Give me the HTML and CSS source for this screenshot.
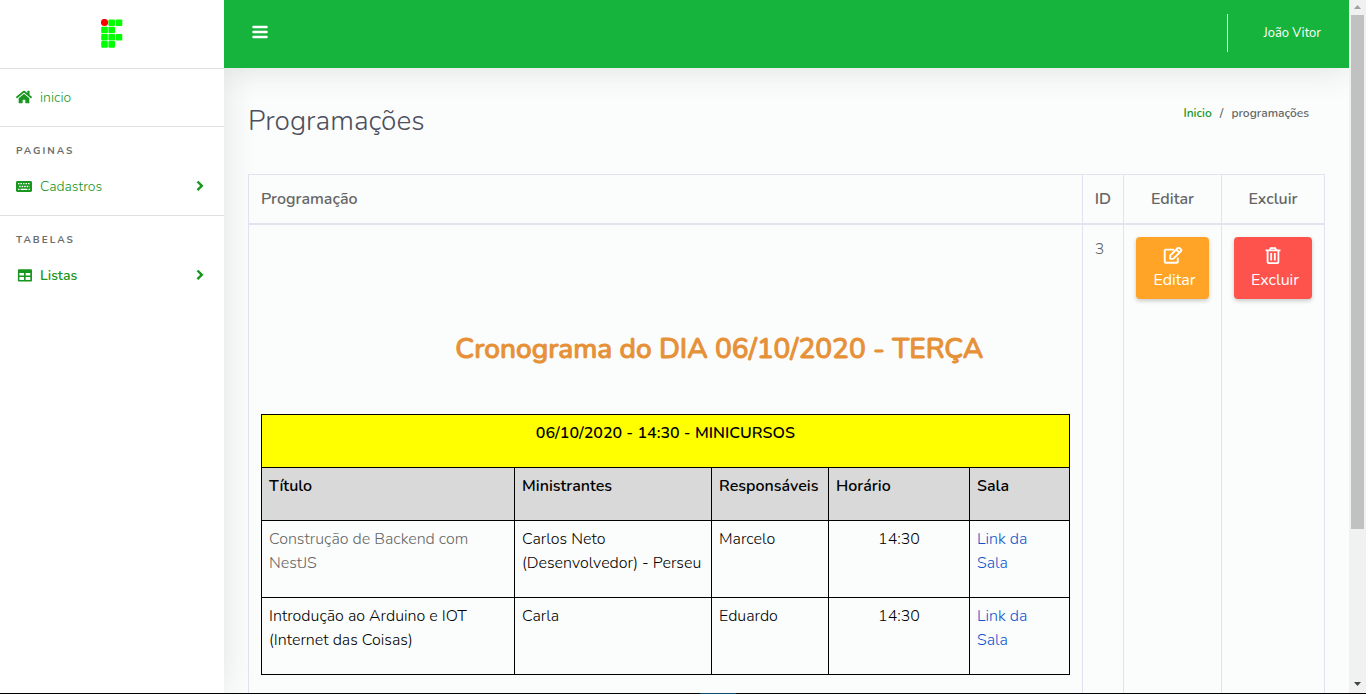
FILE: index.html
```html
<!DOCTYPE html>
<html lang="pt-BR">
<head>
<meta charset="utf-8">
<title>Programações</title>
<link rel="stylesheet" href="styles.css">
</head>
<body>
<div class="app">
  <aside class="sidebar">
    <a class="brand" href="#" aria-label="Página inicial">
      <svg class="brand-logo" viewBox="0 0 22 29">
        <g fill="#0f0">
          <rect x="7.4" y="0.5" width="6.6" height="6.6" rx="1"/><rect x="14.7" y="0.5" width="6.6" height="6.6" rx="1"/>
          <rect x="0.2" y="7.7" width="6.6" height="6.6" rx="1"/><rect x="7.4" y="7.7" width="6.6" height="6.6" rx="1"/>
          <rect x="0.2" y="14.9" width="6.6" height="6.6" rx="1"/><rect x="7.4" y="14.9" width="6.6" height="6.6" rx="1"/><rect x="14.7" y="14.9" width="6.6" height="6.6" rx="1"/>
          <rect x="0.2" y="22.1" width="6.6" height="6.6" rx="1"/><rect x="7.4" y="22.1" width="6.6" height="6.6" rx="1"/>
        </g>
        <circle cx="3.5" cy="3.5" r="3.6" fill="red"/>
      </svg>
    </a>
    <nav>
      <div class="group group-home">
        <a class="item" href="#">
          <svg class="icon" viewBox="0 0 576 512"><path fill="currentColor" d="M280 148 96 300v164a16 16 0 0 0 16 16h112a16 16 0 0 0 16-16v-96a16 16 0 0 1 16-16h64a16 16 0 0 1 16 16v96a16 16 0 0 0 16 16h112a16 16 0 0 0 16-16V300L296 148a12 12 0 0 0-16 0zM572 251l-84-69V44a12 12 0 0 0-12-12h-56a12 12 0 0 0-12 12v72l-89-74a48 48 0 0 0-61 0L4 251a12 12 0 0 0-1 17l25 31a12 12 0 0 0 17 2l235-194a12 12 0 0 1 16 0l235 194a12 12 0 0 0 17-2l25-31a12 12 0 0 0-1-17z"/></svg>
          <span>inicio</span>
        </a>
      </div>
      <div class="group">
        <h2 class="caption">PAGINAS</h2>
        <a class="item" href="#">
          <svg class="icon" viewBox="0 0 16 16"><rect x="0" y="3" width="16" height="11" rx="1.4" fill="currentColor"/><path stroke="#fff" stroke-width="1.3" fill="none" stroke-dasharray="1.5 1" d="M2 5.600h12.400M3.200 8.500h10.400"/><path stroke="#fff" stroke-width="1.300" fill="none" d="M2 11.400h1.500M4.600 11.400h6.800M12.500 11.400H14"/></svg>
          <span>Cadastros</span>
          <svg class="chevron" viewBox="0 0 8 12"><path d="m1.500 1.500 4.300 4.300-4.300 4.300" fill="none" stroke="currentColor" stroke-width="2.400"/></svg>
        </a>
      </div>
      <div class="group">
        <h2 class="caption">TABELAS</h2>
        <a class="item item-active" href="#">
          <svg class="icon" viewBox="0 0 16 16"><path fill="currentColor" fill-rule="evenodd" d="M3.200 2.200h11.500c.8 0 1.300.5 1.300 1.300v9.800c0 .8-.5 1.300-1.300 1.300H3.200c-.8 0-1.300-.5-1.300-1.300V3.500c0-.8.500-1.300 1.300-1.300zM3.400 6v2.500H8V6zm6.200 0v2.500h4.700V6zM3.400 10.100V13H8v-2.900zm6.200 0V13h4.700v-2.900z"/></svg>
          <span>Listas</span>
          <svg class="chevron" viewBox="0 0 8 12"><path d="m1.500 1.500 4.300 4.300-4.300 4.300" fill="none" stroke="currentColor" stroke-width="2.400"/></svg>
        </a>
      </div>
    </nav>
  </aside>
  <div class="page">
    <header class="topbar">
      <button class="menu" type="button" aria-label="Menu">
        <svg viewBox="0 0 16 14"><path d="M1.500 2h13M1.500 7h13M1.500 12h13" stroke="#fff" stroke-width="2.500" stroke-linecap="round"/></svg>
      </button>
      <a class="user" href="#">João Vitor</a>
    </header>
    <main class="content">
      <div class="heading">
        <h1>Programações</h1>
        <nav class="crumbs"><a href="#">Inicio</a><span>/</span><span>programações</span></nav>
      </div>
      <table class="grid">
        <thead><tr><th>Programação</th><th class="col-id">ID</th><th class="col-edit">Editar</th><th class="col-del">Excluir</th></tr></thead>
        <tbody>
          <tr>
            <td>
              <h2 class="day">Cronograma do DIA 06/10/2020 - TERÇA</h2>
              <table class="schedule">
                <colgroup><col class="c-title"><col class="c-speaker"><col class="c-owner"><col class="c-time"><col class="c-room"></colgroup>
                <thead>
                  <tr class="slot"><th colspan="5">06/10/2020 - 14:30 - MINICURSOS</th></tr>
                  <tr class="labels"><th>Título</th><th>Ministrantes</th><th>Responsáveis</th><th>Horário</th><th>Sala</th></tr>
                </thead>
                <tbody>
                  <tr><td class="muted">Construção de Backend com NestJS</td><td>Carlos Neto (Desenvolvedor) - Perseu</td><td>Marcelo</td><td class="time">14:30</td><td class="room"><a href="#">Link da Sala</a></td></tr>
                  <tr><td>Introdução ao Arduino e IOT (Internet das Coisas)</td><td>Carla</td><td>Eduardo</td><td class="time">14:30</td><td class="room"><a href="#">Link da Sala</a></td></tr>
                </tbody>
              </table>
            </td>
            <td>3</td>
            <td>
              <button class="btn btn-edit" type="button">
                <svg viewBox="0 0 18 16"><path fill="none" stroke="#fff" stroke-width="1.800" stroke-linejoin="round" d="M10 2.500H2.200a1 1 0 0 0-1 1v10.300a1 1 0 0 0 1 1h10.300a1 1 0 0 0 1-1v-3.600M6.200 10.600l.3-2.700 7-7c.5-.5 1.100-.5 1.600 0l1.400 1.400c.5.500.5 1.100 0 1.600l-7 7-2.700.3zM12.200 2.600l2.700 2.700"/></svg>
                <span>Editar</span>
              </button>
            </td>
            <td>
              <button class="btn btn-del" type="button">
                <svg viewBox="0 0 16 16"><path fill="none" stroke="#fff" stroke-width="1.700" d="M1 3.200h14M5 3l.8-1.900h4.400L11 3M2.900 3.500v10.700c0 .6.400 1 1 1h8.200c.6 0 1-.4 1-1V3.500M6.300 5.700v7M9.700 5.700v7"/></svg>
                <span>Excluir</span>
              </button>
            </td>
          </tr>
        </tbody>
      </table>
    </main>
  </div>
  <div class="scrollbar" aria-hidden="true">
    <svg class="arrow arrow-up" viewBox="0 0 7 4"><path d="M0 4 3.500 0 7 4z" fill="currentColor"/></svg>
    <div class="track"><div class="thumb"></div></div>
    <svg class="arrow" viewBox="0 0 7 4"><path d="M0 0h7L3.500 4z" fill="currentColor"/></svg>
  </div>
</div>
<div class="taskbar"></div>
</body>
</html>
```

FILE: styles.css
```css
* { box-sizing: border-box; }
body {
  margin: 0;
  height: 100vh;
  display: flex;
  flex-direction: column;
  overflow: hidden;
  font: 300 16px/24px Nunito, Lato, sans-serif;
  color: #666;
  background: #fbfdfc;
}
a { text-decoration: none; }
h1, h2 { margin: 0; }
.app { flex: 1; min-height: 0; display: flex; }
.taskbar { height: 1px; background: linear-gradient(90deg, #000 700px, #0c4a72 700px, #0c4a72 736px, #000 736px); }

.sidebar {
  position: relative;
  z-index: 1;
  flex: 0 0 224px;
  background: #fff;
  box-shadow: 0 0 32px rgba(40, 50, 45, .12);
  clip-path: inset(0 -48px 0 0);
}
.brand {
  height: 69px;
  display: flex;
  align-items: center;
  justify-content: center;
  padding-bottom: 2px;
  border-bottom: 1px solid #dfe1e0;
}
.brand-logo { width: 22px; height: 29px; }
.group { padding: 12px 16px 16px; }
.group + .group { border-top: 1px solid #dfe1e0; }
.group-home { padding-top: 16px; }
.caption { font-size: 10px; line-height: 24px; font-weight: 700; letter-spacing: 2px; color: #6c6c6c; }
.item { display: flex; align-items: center; gap: 8px; height: 25px; font-size: 14px; color: #18961d; }
.caption + .item { margin-top: 11px; }
.item-active { font-weight: 600; }
.icon { width: 16px; height: 16px; margin-bottom: 2px; }
.chevron { width: 8px; height: 12px; margin-left: auto; margin-right: 4px; margin-bottom: 2px; }

.page { flex: 1; min-width: 0; display: flex; flex-direction: column; }
.topbar {
  position: relative;
  z-index: 2;
  flex: 0 0 68px;
  display: flex;
  align-items: center;
  justify-content: space-between;
  padding: 0 28px;
  background: #16b43c;
  box-shadow: 0 4px 32px rgba(40, 50, 45, .12);
  clip-path: inset(0 0 -48px 0);
}
.menu { padding: 0; border: 0; background: none; height: 18px; margin-bottom: 4px; }
.menu svg { width: 16px; height: 14px; display: block; }
.user {
  height: 38px;
  line-height: 38px;
  padding-left: 35px;
  margin-bottom: 2px;
  border-left: 1px solid #e3f6e7;
  font-size: 13px;
  font-weight: 400;
  color: #fff;
}
.content { flex: 1; min-height: 0; overflow: hidden; padding: 32px 24px 0; }
.heading { display: flex; justify-content: space-between; margin-bottom: 32px; }
h1 { font-size: 28px; line-height: 42px; font-weight: 300; color: #4d4f5c; }
.crumbs { display: flex; gap: 8px; padding: 1px 16px 0 0; font-size: 12px; font-weight: 600; color: #666; }
.crumbs a { color: #18961d; }

table { width: 100%; border-collapse: collapse; }
th { font-weight: 600; }
.grid > * > tr > * { padding: 12px; border: 1px solid #e3e2f0; text-align: left; vertical-align: top; }
.grid > thead > tr > th { border-bottom-width: 2px; }
.grid > thead > tr > .col-edit, .grid > thead > tr > .col-del { text-align: center; }
.col-id { width: 41px; }
.col-edit { width: 98px; }
.col-del { width: 103px; }
.day { padding: 92px 0 45px 108px; font-size: 28px; line-height: 40px; font-weight: 500; -webkit-text-stroke: 1px; text-align: center; color: #e69138; }
.schedule { table-layout: fixed; margin-bottom: 48px; color: #000; }
.c-title { width: 253px; }
.c-speaker { width: 197px; }
.c-owner { width: 117px; }
.c-time { width: 141px; }
.schedule th, .schedule td { padding: 6px 7px 22px; border: 1px solid #000; text-align: left; vertical-align: top; }
.schedule .slot th { background: #ff0; text-align: center; }
.schedule .labels th { background: #d9d9d9; }
.schedule .time { text-align: center; }
.schedule .room { padding-right: 24px; }
.schedule .muted { color: #666; }
.schedule a { color: #1155cc; }

.btn {
  width: 100%;
  height: 62px;
  display: flex;
  flex-direction: column;
  align-items: center;
  padding: 10px 12px 7px;
  border: 0;
  border-radius: 4px;
  font: 400 16px/24px Nunito, Lato, sans-serif;
  color: #fff;
  box-shadow: 0 2px 4px rgba(0, 0, 0, .2);
}
.btn svg { height: 17px; width: 20px; margin-bottom: 4px; }
.btn span { padding-left: 4px; }
.btn-edit { background: #ffa426; }
.btn-del { background: #fe534c; }

.scrollbar {
  flex: 0 0 17px;
  display: flex;
  flex-direction: column;
  align-items: center;
  padding: 5px 0 7px;
  background: #f1f1f1;
}
.arrow { width: 7px; height: 4px; color: #444; }
.arrow-up { color: #a0a0a0; }
.track { flex: 1; align-self: stretch; padding: 6px 2px 0; }
.thumb { height: 77%; background: #c1c1c1; }
```
